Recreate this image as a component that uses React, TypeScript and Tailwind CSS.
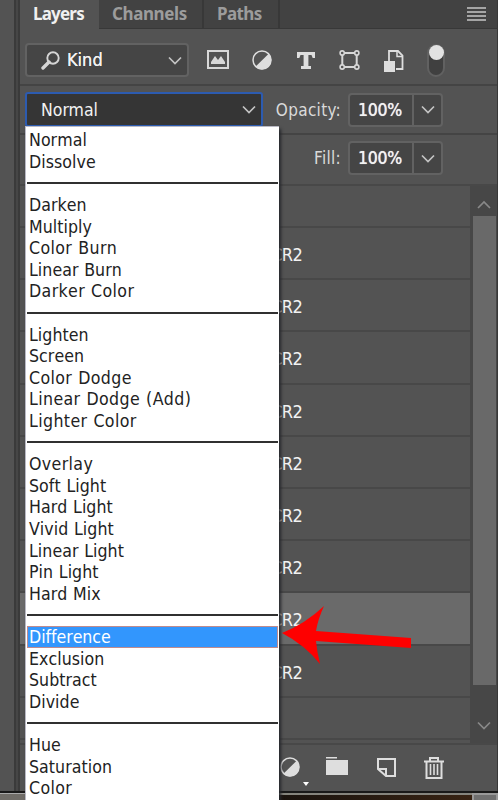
import type { ReactNode } from "react";

const BLEND_GROUPS = [
  ["Normal", "Dissolve"],
  ["Darken", "Multiply", "Color Burn", "Linear Burn", "Darker Color"],
  ["Lighten", "Screen", "Color Dodge", "Linear Dodge (Add)", "Lighter Color"],
  ["Overlay", "Soft Light", "Hard Light", "Vivid Light", "Linear Light", "Pin Light", "Hard Mix"],
  ["Difference", "Exclusion", "Subtract", "Divide"],
  ["Hue", "Saturation", "Color"],
];

const WIDE_MODES = ["Color Burn", "Darker Color", "Color Dodge", "Linear Dodge (Add)", "Lighter Color", "Color", "Overlay"];

const LAYERS = ["CR2", "CR2", "CR2", "CR2", "CR2", "CR2", "CR2", "CR2", "CR2"];
const SELECTED_LAYER = 7;

function Chevron({ up = false, className = "text-[#c4c4c4]" }: { up?: boolean; className?: string }) {
  return (
    <svg width="14" height="9" viewBox="0 0 14 9" fill="none" stroke="currentColor" strokeWidth="1.7" className={className}>
      <path d={up ? "M1 8 7 2 13 8" : "M1 1.5 7 7.5 13 1.5"} />
    </svg>
  );
}

function HalfCircle() {
  return (
    <svg width="20" height="20" viewBox="0 0 20 20" className="shrink-0 text-[#dedede]">
      <circle cx="10" cy="10" r="9" fill="none" stroke="currentColor" strokeWidth="1.5" />
      <path d="M16.7 3.7A9.3 9.3 0 0 1 3.4 16.7Z" fill="currentColor" />
    </svg>
  );
}

function FilterBar() {
  return (
    <div className="flex h-[57px] shrink-0 items-center border-b-2 border-[#444] pt-1 pl-[5px]">
      <div className="mt-[3px] flex h-[34px] w-[164px] items-center rounded-[4px] border-2 border-[#626262] bg-[#454545] pr-[5px] pl-[14px]">
        <svg width="19" height="19" viewBox="0 0 19 19" fill="none" stroke="#d5d5d5">
          <circle cx="12" cy="7" r="5.7" strokeWidth="1.9" />
          <path d="M8 11 2 17" strokeWidth="3.4" strokeLinecap="round" />
        </svg>
        <span className="ml-[7px] flex-1 text-[18px] leading-none [text-shadow:0_0_0.6px_#fff]">Kind</span>
        <Chevron />
      </div>
      <svg width="22" height="19" viewBox="0 0 22 19" className="mt-[2px] ml-[18px]">
        <path d="M1 1H21V18H1Z" fill="none" stroke="#d8d8d8" strokeWidth="2" />
        <path d="M4 14V12L8 6 11 10 14 6 18 12V14Z" fill="#d8d8d8" />
      </svg>
      <div className="mt-[2px] ml-[23px]">
        <HalfCircle />
      </div>
      <svg width="18" height="17" viewBox="0 0 18 17" className="mt-[3px] ml-[25px]" fill="#dedede">
        <path d="M0 0H18V6H15.7L14.5 3H11.4V14H14V17H4V14H6.6V3H3.5L2.3 6H0Z" />
      </svg>
      <svg width="21" height="20" viewBox="0 0 21 20" className="mt-[2px] ml-[24px]" fill="none" stroke="#d8d8d8" strokeWidth="1.6">
        <path d="M5 3H16M5 17H16M3.3 5V15M17.7 5V15" strokeWidth="2" />
        <circle cx="3.2" cy="3" r="2.1" />
        <circle cx="17.8" cy="3" r="2.1" />
        <circle cx="3.2" cy="17" r="2.1" />
        <circle cx="17.8" cy="17" r="2.1" />
      </svg>
      <svg width="20" height="22" viewBox="0 0 20 22" className="mt-[4px] ml-[24px]">
        <path d="M5 11V1H14L18.5 5.5V19H12" fill="none" stroke="#dedede" strokeWidth="1.8" />
        <path d="M13 1V6.5H18" fill="none" stroke="#dedede" strokeWidth="1.5" />
        <path d="M0 11H11V22H0Z" fill="#dedede" />
      </svg>
      <div className="mt-[4px] ml-[23px] h-[33px] w-[18px] rounded-full border-2 border-[#616161] bg-[#404040]">
        <div className="-mt-[1px] -ml-[0.5px] h-[15px] w-[15px] rounded-full bg-[#e2e2e2]" />
      </div>
    </div>
  );
}

function PercentField({ label }: { label: ReactNode }) {
  return (
    <div className="flex items-center">
      <span className="mr-[7px] pt-[1px] text-[17px] leading-none tracking-[0.3px] text-[#dadada]">{label}</span>
      <div className="flex h-[34px] w-[95px] rounded-[4px] border-2 border-[#626262] bg-[#454545]">
        <div className="flex w-[64px] items-center justify-center border-r-2 border-[#626262] pt-[1px] pr-[2px] text-[17.5px] tracking-[-0.2px] [text-shadow:0_0_0.7px_#fff]">
          100%
        </div>
        <div className="flex flex-1 items-center justify-center">
          <Chevron />
        </div>
      </div>
    </div>
  );
}

function BlendMode({ mode }: { mode: string }) {
  if (mode === "Difference") {
    return (
      <div className="flex h-[21.62px] items-center border border-[#c08b8d] bg-[#3296fd] pt-[1px] pl-[1px] tracking-[-0.05px] text-white">
        {mode}
      </div>
    );
  }
  return (
    <div
      className={
        WIDE_MODES.includes(mode)
          ? "flex h-[21.62px] items-center pt-[1px] pl-[2px] tracking-[0.38px]"
          : "flex h-[21.62px] items-center pt-[1px] pl-[2px]"
      }
    >
      {mode}
    </div>
  );
}

function BlendMenu() {
  return (
    <div className="absolute top-[126px] left-[25px] h-[674px] w-[254px] overflow-hidden border-t border-l border-[#b9b9c4] bg-white pt-[2px] pr-[1px] pl-[1px] text-[17.6px] tracking-[0.05px] text-[#222] shadow-[2px_3px_3px_#25272c] [font-kerning:none] [font-variant-ligatures:none] [word-spacing:0.6px]">
      {BLEND_GROUPS.map((group, i) => (
        <div key={group[0]}>
          {i > 0 && (
            <div className="flex h-[21.62px] items-center">
              <div className="h-[2px] w-full bg-[#303030]" />
            </div>
          )}
          {group.map((mode) => (
            <BlendMode key={mode} mode={mode} />
          ))}
        </div>
      ))}
    </div>
  );
}

export default function App() {
  return (
    <div className="relative flex h-[800px] w-[498px] flex-col overflow-hidden bg-[#535353] font-['DejaVu_Sans_Condensed','DejaVu_Sans',sans-serif] whitespace-nowrap text-[#f2f2f2] [font-stretch:condensed]">
      <div className="flex h-[791px] shrink-0">
        <div className="w-[14px] shrink-0" />
        <div className="w-[6px] shrink-0 border-x-2 border-[#3a3a3a] bg-[#464646]" />
        <div className="flex w-[477px] shrink-0 flex-col">
          {/* Tabs */}
          <div className="flex h-[29px] shrink-0 bg-[#424242] font-['Noto_Sans'] text-[17px] font-bold tracking-[-0.4px] text-[#9c9c9c] [font-stretch:normal]">
            <div className="flex w-[79px] items-center bg-[#535353] pb-[1px] pl-[13px] tracking-[-0.8px] text-[#f0f0f0]">Layers</div>
            <div className="flex w-[105px] items-center border-r-2 border-b border-[#383838] pl-[13px]">Channels</div>
            <div className="flex w-[76px] items-center border-r-2 border-b border-[#383838] pl-[13px] tracking-[-0.6px]">Paths</div>
            <div className="flex flex-1 items-center justify-end border-b border-[#383838] pr-[11px]">
              <div className="flex w-[19px] flex-col gap-[2px]">
                <div className="h-[2px] bg-[#a5a5a5]" />
                <div className="h-[2px] bg-[#a5a5a5]" />
                <div className="h-[2px] bg-[#a5a5a5]" />
                <div className="h-[2px] bg-[#a5a5a5]" />
              </div>
            </div>
          </div>

          <FilterBar />

          {/* Blend mode + opacity */}
          <div className="flex h-[49px] shrink-0 items-center justify-between border-b-2 border-[#444] pr-[54px] pl-[5px]">
            <div className="flex h-[35px] w-[238px] items-center rounded-[3px] border-2 border-[#2c5bb0] bg-[#353535] pr-[5px] pl-[14px]">
              <span className="flex-1 pt-[1px] text-[17.5px]">Normal</span>
              <Chevron />
            </div>
            <PercentField label="Opacity:" />
          </div>
          <div className="flex h-[49px] shrink-0 items-center justify-end pr-[54px] pb-[3px]">
            <PercentField label="Fill:" />
          </div>

          {/* Layer list */}
          <div className="flex h-[561px] shrink-0 overflow-hidden border-t-2 border-b-2 border-[#484848]">
            <div className="w-[450px] shrink-0">
              <div className="h-[42px] border-b-2 border-[#484848]" />
              {LAYERS.map((name, i) => (
                <div
                  key={i}
                  className={
                    i === SELECTED_LAYER
                      ? "flex h-[52.2px] items-center border-b-2 border-[#484848] bg-[#6a6a6a] pt-[3px] pl-[251px] text-[18px] tracking-[-0.5px]"
                      : "flex h-[52.2px] items-center border-b-2 border-[#484848] pt-[3px] pl-[251px] text-[18px] tracking-[-0.5px]"
                  }
                >
                  {name}
                </div>
              ))}
              <div className="h-[42px] border-b-2 border-[#484848]" />
            </div>
            <div className="flex flex-1 flex-col items-center bg-[#474747] pl-[1px]">
              <div className="flex h-[30px] items-center pt-[6px]">
                <Chevron up className="text-[#898989]" />
              </div>
              <div className="h-[469px] w-[23px] bg-[#696969]" />
              <div className="flex flex-1 items-center">
                <Chevron className="mt-[22px] text-[#898989]" />
              </div>
            </div>
          </div>

          {/* Footer actions */}
          <div className="flex flex-1 items-start pt-[12px] pl-[260px]">
            <div className="flex w-[46px]">
              <HalfCircle />
              <svg width="6" height="4" viewBox="0 0 6 4" className="mt-[25px] ml-[3px]" fill="#fff">
                <path d="M0 0H6L3 4Z" />
              </svg>
            </div>
            <svg width="22" height="18" viewBox="0 0 22 18" fill="#dedede">
              <path d="M0 0H11V1.5H0ZM0 3H22V18H0Z" />
            </svg>
            <svg width="19" height="19" viewBox="0 0 19 19" className="mt-[1px] ml-[29px]" fill="none" stroke="#dedede" strokeWidth="2">
              <path d="M1 11V1H18V18H9L1 11H9V18" />
            </svg>
            <svg width="20" height="22" viewBox="0 0 20 22" className="ml-[28px]" fill="none" stroke="#dedede" strokeWidth="2">
              <path d="M0 4.5H20M6 4V1H14V4M2.5 5V21H17.5V5" />
              <path d="M6.5 7V18M10 7V18M13.5 7V18" strokeWidth="1.6" />
            </svg>
          </div>
        </div>
        <div className="flex-1 bg-[#383838]" />
      </div>

      {/* Strip of the window behind the panel */}
      <div className="flex h-[9px] shrink-0 border-t-2 border-[#191919]">
        <div className="w-[30px] border-t border-[#aaa] bg-[#706d68]" />
        <div className="flex-1 border-t-2 border-[#85847d] bg-linear-to-r from-[#191713] via-[#16110d] to-[#382313]" />
        <div className="w-[26px] border-2 border-b-0 border-[#999] bg-[#707070]" />
      </div>

      <BlendMenu />

      <svg width="130" height="60" viewBox="0 0 130 60" className="absolute top-[606px] left-[282px]" fill="#fe0000">
        <path d="M0 27Q23 18 42 0Q36 13 34 25L129 32 129 42 34 35Q35 46 38 58Q23 39 0 27Z" />
      </svg>
    </div>
  );
}
